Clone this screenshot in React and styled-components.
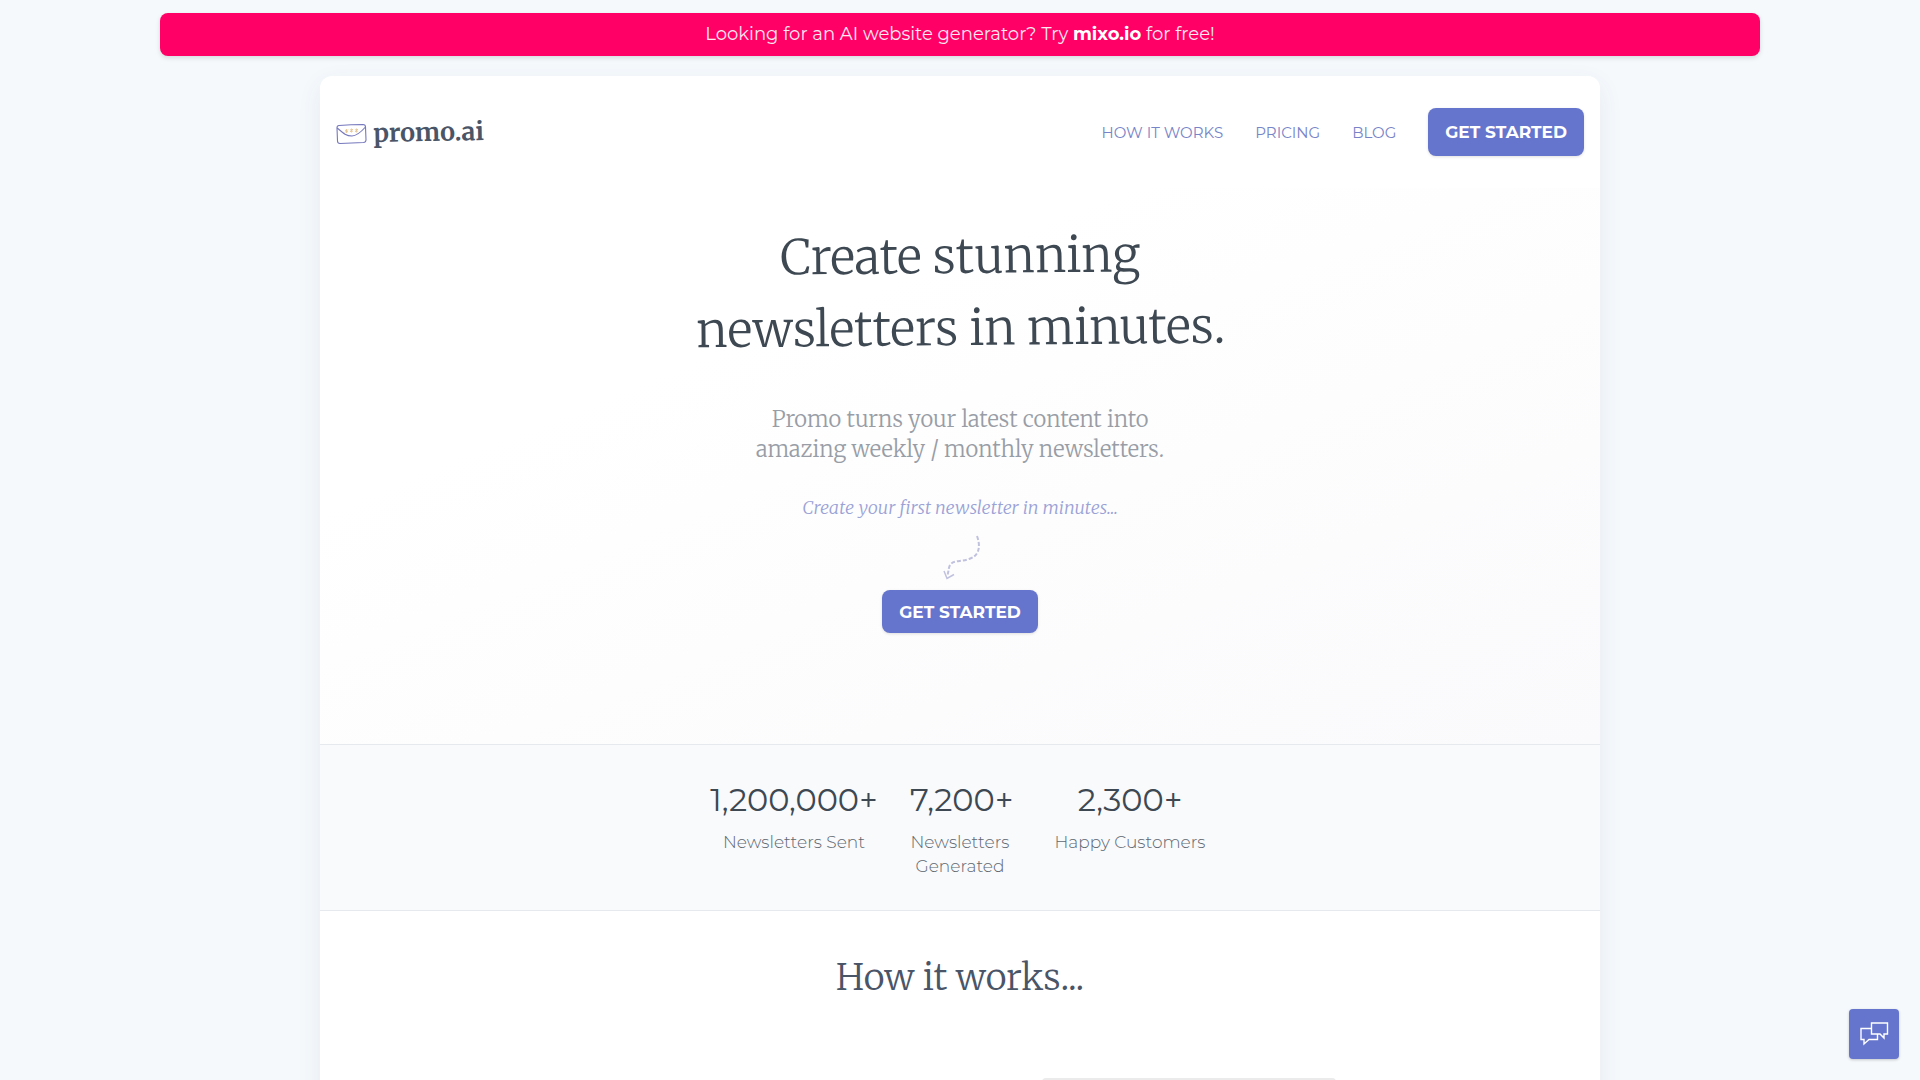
import React from 'react';
import styled, { createGlobalStyle } from 'styled-components';

const sans = "Montserrat, Inter, 'Open Sans', sans-serif";
const serif = "Merriweather, 'DejaVu Serif Condensed', 'DejaVu Serif', serif";

const stats = [
    { value: '1,200,000+', label: 'Newsletters Sent', width: 200 },
    { value: '7,200+', label: 'Newsletters Generated', width: 132 },
    { value: '2,300+', label: 'Happy Customers', width: 208 },
];

const Envelope = () => (
    <svg width='32' height='26' viewBox='0 0 32 26' fill='none' aria-hidden='true'>
        <path
            d='M3 6.5 Q15 5.6 27 5.5 Q29.5 5.6 29.5 8 L30 21 Q29.8 23.3 27.5 23.5 L4 24.5 Q1.5 24.4 1.5 22 L1 9 Q0.8 6.8 3 6.5Z'
            stroke='#7678bd'
            strokeWidth='1.1'
        />
        <path d='M1.2 9 C7 14 10 17 16 17 C21 17 25 13 29.5 8' stroke='#7678bd' strokeWidth='1.1' />
        <g stroke='#e6c592' strokeWidth='0.9'>
            <path d='M9 11l3 2M12 10.5l-3 3M10.5 10v4' />
            <path d='M14 10.5l3 2M17 10l-3 3M15.5 9.5v4' />
            <path d='M19 10.5l3 2M22 10l-3 3M20.5 9.5v4' />
        </g>
    </svg>
);

const DashedArrow = () => (
    <svg width='40' height='46' viewBox='0 0 40 46' fill='none' stroke='#c0c1de' aria-hidden='true'>
        <path
            d='M37 2 C41 13 39 22 29 25 C21 28 13 26 10 31 C8 35 9 38 7 42'
            strokeWidth='2'
            strokeDasharray='4 2'
        />
        <path d='M4 37 L7 44.5 L14 40.5' strokeWidth='1.5' />
    </svg>
);

const ChatBubbles = () => (
    <svg width='30' height='26' viewBox='0 0 30 26' fill='none' stroke='#fff' strokeWidth='1.4' aria-hidden='true'>
        <path d='M12.5 2h16v11h-3.5v4l-4-4h-8.5z' />
        <path d='M12.5 7.5H2v11h3v4.5l5-4.5h8.5v-5.5' />
    </svg>
);

const App = () => {
    return (
        <>
            <GlobalStyle />
            <Banner href='#mixo'>
                Looking for an AI website generator? Try <b>mixo.io</b> for free!
            </Banner>
            <Page>
                <Header>
                    <Logo href='#home'>
                        <Envelope />
                        <span>promo.ai</span>
                    </Logo>
                    <Nav>
                        <NavLink href='#how'>How it works</NavLink>
                        <NavLink href='#pricing'>Pricing</NavLink>
                        <NavLink href='#blog'>Blog</NavLink>
                        <Button $tall>Get started</Button>
                    </Nav>
                </Header>
                <Hero>
                    <Title>
                        Create stunning
                        <br />
                        newsletters in minutes.
                    </Title>
                    <Subtitle>
                        Promo turns your latest content into
                        <br />
                        amazing weekly / monthly newsletters.
                    </Subtitle>
                    <Hint>Create your first newsletter in minutes...</Hint>
                    <DashedArrow />
                    <HeroAction>
                        <Button>Get started</Button>
                    </HeroAction>
                </Hero>
                <Stats>
                    {stats.map(stat => (
                        <Stat key={stat.value} $width={stat.width}>
                            <StatValue>{stat.value}</StatValue>
                            <StatLabel>{stat.label}</StatLabel>
                        </Stat>
                    ))}
                </Stats>
                <Steps id='how'>
                    <StepsTitle>How it works...</StepsTitle>
                    <StepsRow>
                        <Preview />
                    </StepsRow>
                </Steps>
            </Page>
            <ChatButton aria-label='Open chat'>
                <ChatBubbles />
            </ChatButton>
        </>
    );
};

const GlobalStyle = createGlobalStyle`
    * {
        box-sizing: border-box;
    }

    body {
        margin: 0;
        background: #f5f9fc;
        color: #3d4852;
        font-family: ${sans};
    }
`;

const Banner = styled.a`
    display: block;
    max-width: 1600px;
    margin: 13px auto 20px;
    padding: 8px 16px;
    border-radius: 8px;
    background: #ff0066;
    box-shadow: 0 2px 5px rgba(0, 0, 0, 0.12);
    color: #ffe6f0;
    font-size: 18px;
    line-height: 27px;
    text-align: center;
    text-decoration: none;

    b {
        color: #fff;
        font-weight: 700;
    }
`;

const Page = styled.main`
    max-width: 1280px;
    margin: 0 auto;
    border-radius: 12px 12px 0 0;
    background: #fff;
    box-shadow: 0 8px 24px rgba(60, 80, 120, 0.08);
`;

const Header = styled.header`
    display: flex;
    align-items: center;
    justify-content: space-between;
    padding: 32px 16px;
`;

const Logo = styled.a`
    display: flex;
    align-items: center;
    gap: 5px;
    color: #4a5568;
    font-family: ${serif};
    font-size: 25px;
    font-weight: 700;
    line-height: 32px;
    text-decoration: none;

    span {
        transform: rotate(-1deg);
    }
`;

const Nav = styled.nav`
    display: flex;
    align-items: center;
    gap: 32px;
`;

const NavLink = styled.a`
    color: #7884c8;
    font-size: 15px;
    text-decoration: none;
    text-transform: uppercase;
`;

const Button = styled.button`
    height: ${props => (props.$tall ? '48px' : '43px')};
    padding: 0 17px;
    border: 0;
    border-radius: 8px;
    background: #6574cd;
    box-shadow: 0 1px 3px rgba(0, 0, 0, 0.12);
    color: #fff;
    font-family: inherit;
    font-size: 17px;
    font-weight: 700;
    text-transform: uppercase;
    cursor: pointer;
`;

const Hero = styled.section`
    display: flex;
    flex-direction: column;
    align-items: center;
    padding: 32px 16px 111px;
    background: linear-gradient(158deg, #fff 30%, #fafafc);
    text-align: center;
`;

const HeroAction = styled.div`
    padding-top: 10px;
`;

const Title = styled.h1`
    margin: 0 0 40px;
    font-family: ${serif};
    font-size: 48px;
    font-weight: 300;
    line-height: 72px;
    transform: rotate(-0.5deg);
`;

const Subtitle = styled.h2`
    margin: 0 0 32px;
    color: #989da6;
    font-family: ${serif};
    font-size: 22px;
    font-weight: 300;
    line-height: 30px;
`;

const Hint = styled.p`
    margin: 0 0 14px;
    color: #9aa2d6;
    font-family: ${serif};
    font-size: 18px;
    font-style: italic;
    font-weight: 300;
    line-height: 24px;
`;

const Stats = styled.section`
    display: flex;
    justify-content: center;
    padding: 32px 0 32px 8px;
    border-top: 1px solid #e6eaee;
    border-bottom: 1px solid #e6eaee;
    background: #f8fafc;
    text-align: center;
`;

const Stat = styled.div`
    width: ${props => props.$width}px;
    padding: 0 16px;
`;

const StatValue = styled.div`
    font-size: 32px;
    line-height: 45px;
`;

const StatLabel = styled.div`
    margin-top: 8px;
    color: #5f6871;
    font-size: 17px;
    font-weight: 300;
    line-height: 24px;
`;

const Steps = styled.section`
    padding: 40px 16px 0;
`;

const StepsTitle = styled.h2`
    margin: 0 0 73px;
    color: #4a5568;
    font-family: ${serif};
    font-size: 36px;
    font-weight: 300;
    line-height: 54px;
    text-align: center;
`;

const StepsRow = styled.div`
    display: flex;
    justify-content: flex-end;
    padding-right: 248px;
`;

const Preview = styled.div`
    width: 294px;
    height: 200px;
    border-radius: 4px;
    background: #ebebeb;
`;

const ChatButton = styled.button`
    position: fixed;
    right: 21px;
    bottom: 21px;
    display: flex;
    align-items: center;
    justify-content: center;
    width: 50px;
    height: 50px;
    padding: 0;
    border: 0;
    border-radius: 4px;
    background: #6574cd;
    box-shadow: 0 1px 3px rgba(0, 0, 0, 0.2);
    cursor: pointer;
`;

export default App;
